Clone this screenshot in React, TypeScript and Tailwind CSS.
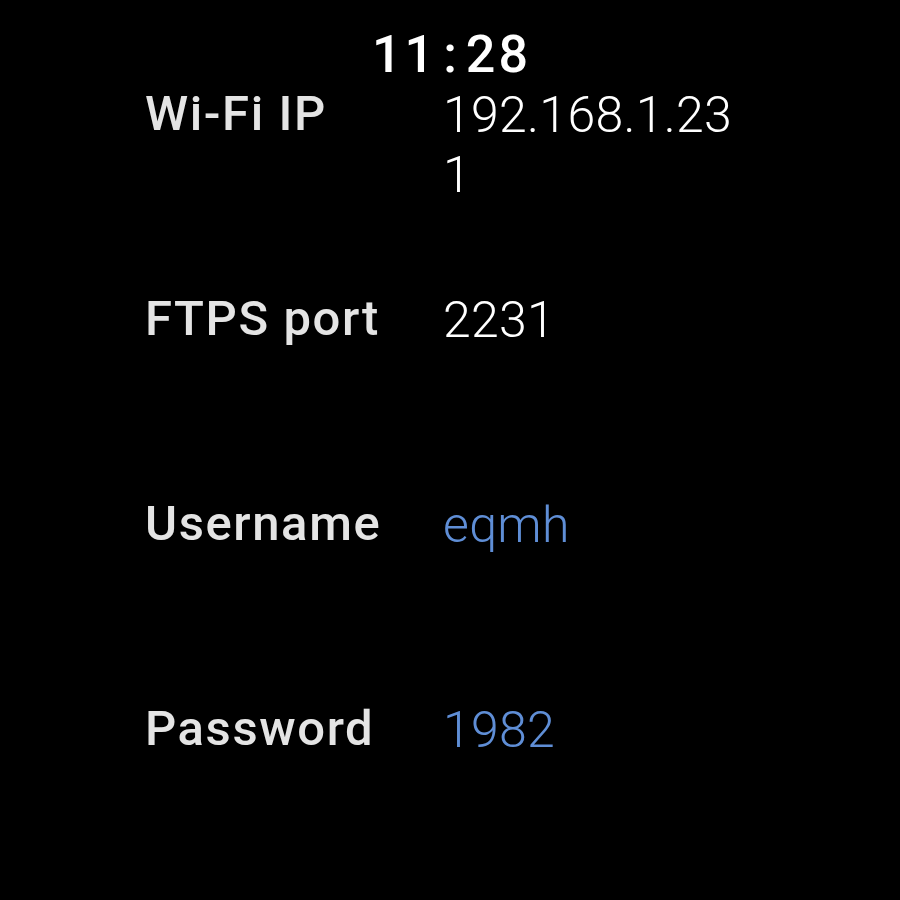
import React from "react";

const rows: { label: string; value: string; blue?: boolean }[] = [
  { label: "Wi-Fi IP", value: "192.168.1.231" },
  { label: "FTPS port", value: "2231" },
  { label: "Username", value: "eqmh", blue: true },
  { label: "Password", value: "1982", blue: true },
];

export default function App() {
  return (
    <div
      className="w-[900px] h-[900px] bg-black overflow-hidden"
      style={{ fontFamily: "Roboto, 'Noto Sans', sans-serif" }}
    >
      <div className="h-[84px] pt-[29px] flex justify-center">
        <div className="text-[52px] leading-[52px] font-medium text-white tracking-[3px] flex pl-[3px]">
          <span>11</span>
          <span className="mx-[6px]">:</span>
          <span>28</span>
        </div>
      </div>
      <div className="flex flex-col pl-[145px]">
        {rows.map((r) => (
          <div key={r.label} className="h-[205px] flex items-start">
            <div className="w-[298px] shrink-0 text-[49px] leading-[60px] font-medium text-[#e4e4e4] tracking-[1.6px]">
              {r.label}
            </div>
            <div
              className={`w-[305px] break-all text-[50px] leading-[60px] font-light pt-[1px] tracking-[0.3px] ${
                r.blue ? "text-[#5f8ed6]" : "text-white"
              }`}
            >
              {r.value}
            </div>
          </div>
        ))}
      </div>
    </div>
  );
}
